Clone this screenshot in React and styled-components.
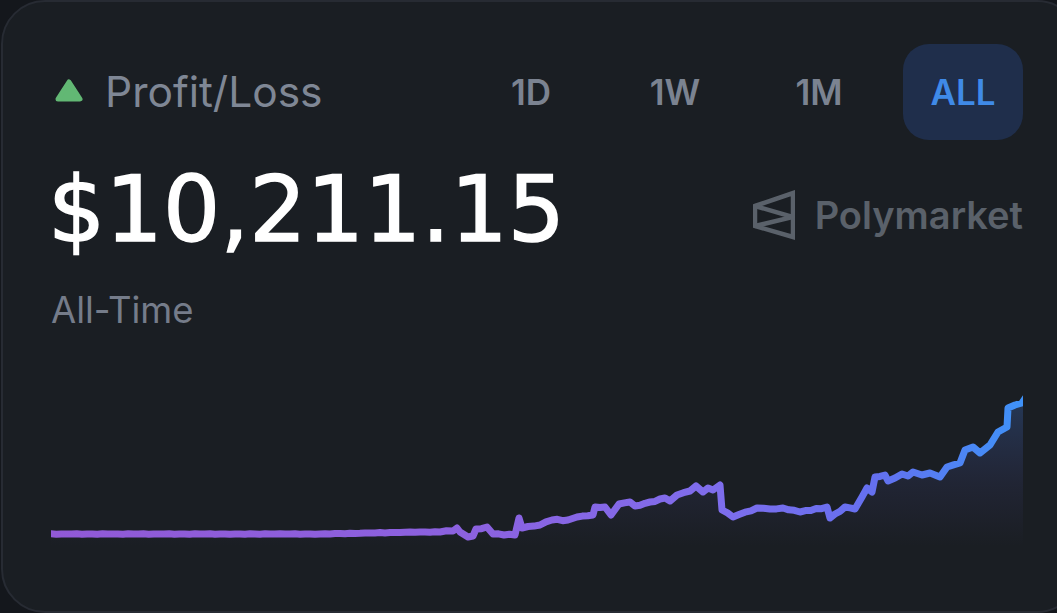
import styled, { createGlobalStyle } from 'styled-components';

const GlobalStyle = createGlobalStyle`
  html, body {
    margin: 0;
    height: 100%;
    background: #14171c;
    overflow: hidden;
  }
`

const LINE = [
  [46, 534], [200, 534], [320, 534], [420, 532], [440, 532], [453, 531], [457, 528], [460, 532], [468, 537],
  [473, 536], [476, 529], [487, 527], [493, 534], [515, 535], [519, 518], [522, 528], [540, 525],
  [552, 520], [568, 520], [577, 517], [593, 515], [595, 507], [605, 507], [611, 515], [619, 504],
  [630, 502], [635, 506], [650, 502], [665, 498], [670, 501], [677, 495], [690, 491], [696, 486],
  [703, 492], [708, 488], [713, 490], [720, 485], [722, 510], [733, 517], [757, 508], [770, 509],
  [783, 508], [800, 512], [827, 507], [830, 518], [845, 507], [855, 509], [862, 497], [867, 488],
  [872, 492], [875, 477], [885, 475], [888, 481], [902, 474], [908, 476], [913, 472], [922, 475],
  [930, 473], [940, 477], [947, 467], [960, 463], [965, 450], [973, 447], [980, 453], [990, 445],
  [998, 432], [1007, 427], [1008, 408], [1022, 403], [1028, 394],
]

// the real series is noisy, so break long segments up and wobble them a bit
const noisy = LINE.flatMap(([x, y], i) => {
  const next = LINE[i + 1]
  if (!next || next[0] - x < 8) return [[x, y]]
  const steps = Math.floor((next[0] - x) / 5)
  const amp = x < 440 ? 0.2 : 0.7
  return Array.from({ length: steps }, (_, s) => {
    const px = x + ((next[0] - x) * s) / steps
    const py = y + ((next[1] - y) * s) / steps
    return [px, s ? py + Math.sin(px * 1.7) * amp : py]
  })
})

const linePath = noisy.map(([x, y], i) => `${i ? 'L' : 'M'}${x.toFixed(1)} ${y.toFixed(1)}`).join(' ')
const areaPath = `${linePath} L1028 546 L46 546 Z`

function App() {
  return (
    <Card>
      <GlobalStyle />
      <TopRow>
        <Title>
          <svg width="32" height="26" viewBox="0 0 32 26">
            <path d="M16 4 L27 21 H5 Z" fill="#62b874" stroke="#62b874" strokeWidth="5" strokeLinejoin="round" />
          </svg>
          <TitleText>Profit/Loss</TitleText>
        </Title>
        <Ranges>
          <Range>1D</Range>
          <Range>1W</Range>
          <Range>1M</Range>
          <Range $active>ALL</Range>
        </Ranges>
      </TopRow>
      <ValueRow>
        <Amount>$10,211.15</Amount>
        <Brand>
          <svg width="42" height="50" viewBox="0 0 42 50" fill="none" stroke="#5a616a" strokeWidth="4.5">
            <path d="M2 16 L40 3 V47 L2 36 Z" />
            <path d="M2 16 L40 27 L2 36" />
          </svg>
          <BrandName>Polymarket</BrandName>
        </Brand>
      </ValueRow>
      <Period>All-Time</Period>
      <Chart viewBox="51 340 972 230">
        <defs>
          <linearGradient id="stroke" gradientUnits="userSpaceOnUse" x1="51" y1="0" x2="1022" y2="0">
            <stop offset="0" stopColor="#9159d6" />
            <stop offset="0.45" stopColor="#8b62e0" />
            <stop offset="0.68" stopColor="#7f6dec" />
            <stop offset="0.85" stopColor="#6470ef" />
            <stop offset="0.95" stopColor="#4a88f5" />
            <stop offset="1" stopColor="#3f92f8" />
          </linearGradient>
          <linearGradient id="area" gradientUnits="userSpaceOnUse" x1="0" y1="396" x2="0" y2="546">
            <stop offset="0" stopColor="#3f7fe0" stopOpacity="0.28" />
            <stop offset="0.6" stopColor="#5a60c8" stopOpacity="0.1" />
            <stop offset="1" stopColor="#6a5ac8" stopOpacity="0" />
          </linearGradient>
        </defs>
        <path d={areaPath} fill="url(#area)" />
        <path d={linePath} fill="none" stroke="url(#stroke)" strokeWidth="7" strokeLinejoin="round" strokeLinecap="round" />
      </Chart>
    </Card>
  )
}

export default App

const Card = styled.div`
  box-sizing: border-box;
  width: 1080px;
  height: 613px;
  margin-left: 1px;
  padding: 42px 0 0 48px;
  background: #1a1e23;
  border: 2px solid #272b33;
  border-radius: 44px;
  font-family: Inter, "Liberation Sans", sans-serif;
  overflow: hidden;
`
const TopRow = styled.div`
  display: flex;
  align-items: center;
  justify-content: space-between;
  width: 972px;
  height: 96px;
`
const Title = styled.div`
  display: flex;
  align-items: center;
  gap: 20px;
  margin: -2px 0 0 2px;
`
const TitleText = styled.span`
  font-size: 42.5px;
  font-weight: 400;
  color: #7f8795;
`
const Ranges = styled.div`
  display: flex;
  align-items: center;
  gap: 24px;
`
const Range = styled.div`
  box-sizing: border-box;
  width: 120px;
  height: 96px;
  display: flex;
  align-items: center;
  justify-content: center;
  border-radius: 26px;
  font-size: 35px;
  font-weight: 600;
  color: ${p => (p.$active ? '#3f8ae8' : '#7b8391')};
  background: ${p => (p.$active ? '#1f2e4b' : 'transparent')};
`
const ValueRow = styled.div`
  display: flex;
  align-items: center;
  justify-content: space-between;
  width: 972px;
  margin-top: 20px;
`
const Amount = styled.div`
  font-family: "DejaVu Sans", Inter, sans-serif;
  font-size: 90px;
  line-height: 100px;
  font-weight: 400;
  letter-spacing: 0.2px;
  margin-left: -3px;
  -webkit-text-stroke: 1.5px #ffffff;
  color: #ffffff;
`
const Brand = styled.div`
  display: flex;
  align-items: center;
  gap: 20px;
  padding-top: 10px;
`
const BrandName = styled.span`
  font-size: 38px;
  font-weight: 600;
  color: #5a616a;
`
const Period = styled.div`
  margin-top: 28px;
  font-size: 36.5px;
  line-height: 44px;
  color: #757c8a;
`
const Chart = styled.svg`
  display: block;
  margin-top: 8px;
  width: 972px;
  height: 230px;
`
